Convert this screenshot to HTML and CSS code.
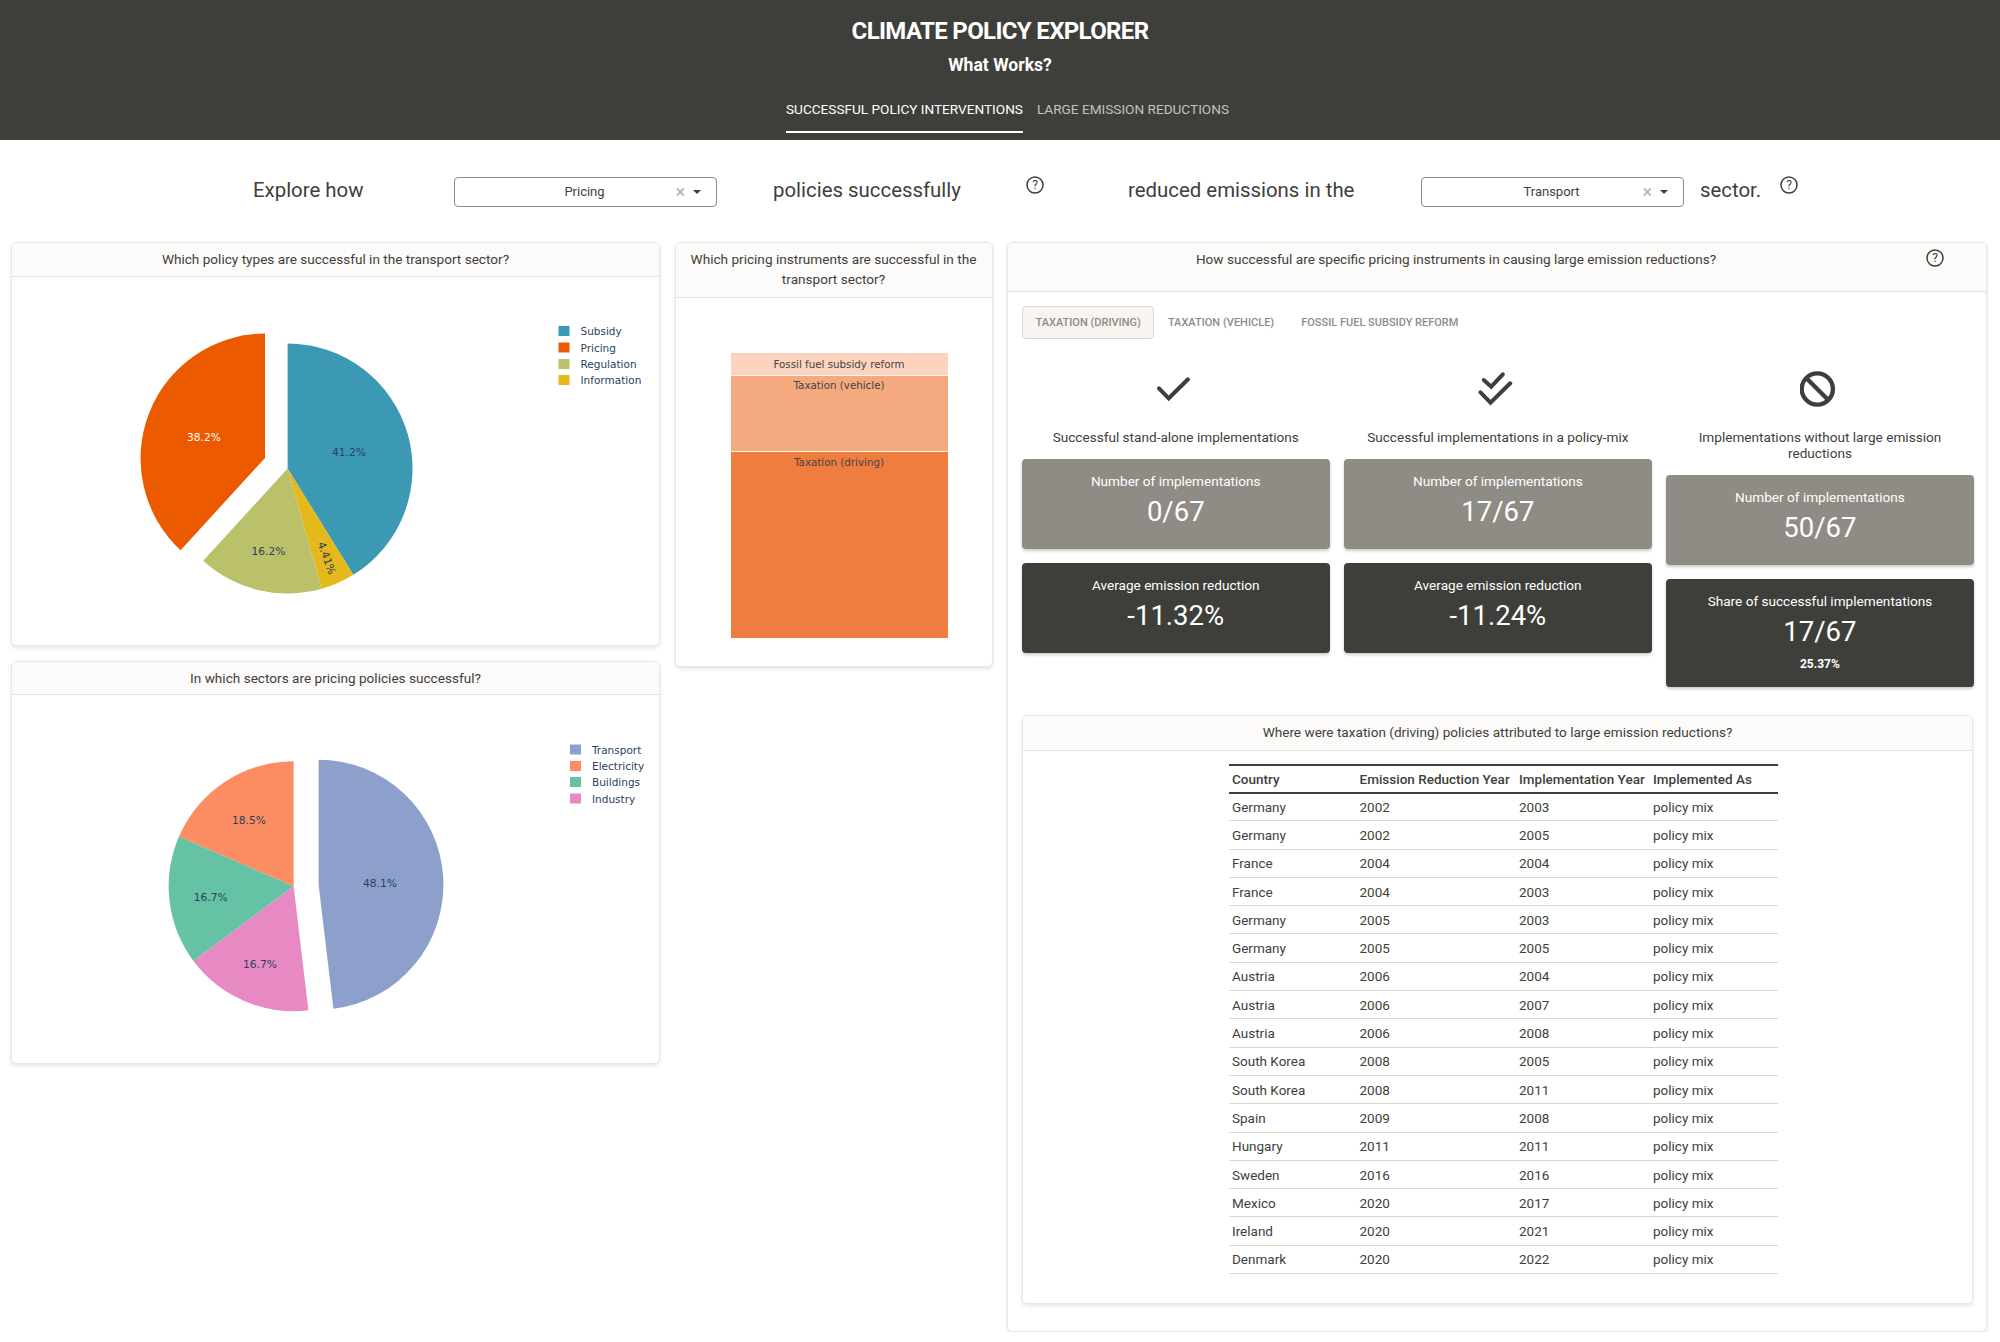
FILE: index.html
```html
<!DOCTYPE html>
<html lang="en">
<head>
    <meta charset="UTF-8">
    <meta name="viewport" content="width=device-width, initial-scale=1.0">
    <title>Climate Policy Explorer</title>
    <link rel="stylesheet" href="styles.css">
</head>
<body>

<header class="top">
    <h1>CLIMATE POLICY EXPLORER</h1>
    <h2>What Works?</h2>
    <nav class="top-nav">
        <a class="top-link active">SUCCESSFUL POLICY INTERVENTIONS</a>
        <a class="top-link">LARGE EMISSION REDUCTIONS</a>
    </nav>
</header>

<section class="intro">
    <span class="intro-text first">Explore how</span>
    <div class="select select-a">
        <span>Pricing</span>
        <i class="clear">×</i><i class="caret"></i>
    </div>
    <span class="intro-text second">policies successfully</span>
    <svg class="help help-a" viewBox="0 0 18 18"><circle cx="9" cy="9" r="8" /><text x="9" y="13">?</text></svg>
    <span class="intro-text third">reduced emissions in the</span>
    <div class="select select-b">
        <span>Transport</span>
        <i class="clear">×</i><i class="caret"></i>
    </div>
    <span class="intro-text fourth">sector.</span>
    <svg class="help help-b" viewBox="0 0 18 18"><circle cx="9" cy="9" r="8" /><text x="9" y="13">?</text></svg>
</section>

<main class="board">
    <div class="stack">
        <div class="card">
            <div class="card-head">Which policy types are successful in the transport sector?</div>
            <svg class="plot" viewBox="12 277 647 368">
                <path fill="#3b99b3" d="M287.6 468.5 L287.6 343.5 A125 125 0 0 1 353.3 574.8 Z" />
                <path fill="#e5b81c" d="M287.6 468.5 L353.3 574.8 A125 125 0 0 1 321.6 588.8 Z" />
                <path fill="#bbc16b" d="M287.6 468.5 L321.6 588.8 A125 125 0 0 1 203.2 560.7 Z" />
                <path fill="#ec5a00" d="M265 458 L180.6 550.2 A125 125 0 0 1 265 333.5 Z" />
                <text class="pie-label" x="349" y="456">41.2%</text>
                <text class="pie-label light" x="204" y="441">38.2%</text>
                <text class="pie-label" x="268.4" y="555">16.2%</text>
                <text class="pie-label" transform="translate(327 558) rotate(70)" y="4">4.41%</text>
                <rect fill="#3b99b3" x="558.500" y="326" width="11" height="10" />
                <rect fill="#ec5a00" x="558.500" y="342.5" width="11" height="10" />
                <rect fill="#bbc16b" x="558.500" y="359" width="11" height="10" />
                <rect fill="#e5b81c" x="558.500" y="375" width="11" height="10" />
                <text class="legend" x="580.500" y="335">Subsidy</text>
                <text class="legend" x="580.500" y="351.500">Pricing</text>
                <text class="legend" x="580.500" y="368">Regulation</text>
                <text class="legend" x="580.500" y="384">Information</text>
            </svg>
        </div>
        <div class="card">
            <div class="card-head">In which sectors are pricing policies successful?</div>
            <svg class="plot" viewBox="12 695.500 647 368">
                <path fill="#8da0cb" d="M318.6 885.2 L318.6 760.2 A125 125 0 0 1 333.4 1009.3 Z" />
                <path fill="#e78ac3" d="M293.6 886.7 L308.4 1010.8 A125 125 0 0 1 193.4 961.4 Z" />
                <path fill="#66c2a5" d="M293.6 886.7 L193.4 961.4 A125 125 0 0 1 179 836.9 Z" />
                <path fill="#fc8d62" d="M293.6 886.7 L179 836.9 A125 125 0 0 1 293.6 761.7 Z" />
                <text class="pie-label" x="380" y="887">48.1%</text>
                <text class="pie-label" x="249" y="824">18.5%</text>
                <text class="pie-label" x="210.700" y="901">16.7%</text>
                <text class="pie-label" x="260" y="968">16.7%</text>
                <rect fill="#8da0cb" x="570" y="745" width="11" height="10" />
                <rect fill="#fc8d62" x="570" y="761.500" width="11" height="10" />
                <rect fill="#66c2a5" x="570" y="777.500" width="11" height="10" />
                <rect fill="#e78ac3" x="570" y="794" width="11" height="10" />
                <text class="legend" x="592" y="754">Transport</text>
                <text class="legend" x="592" y="770.500">Electricity</text>
                <text class="legend" x="592" y="786.500">Buildings</text>
                <text class="legend" x="592" y="803">Industry</text>
            </svg>
        </div>
    </div>

    <div class="card card-treemap">
        <div class="card-head">Which pricing instruments are successful in the transport sector?</div>
        <div class="treemap">
            <div class="tile tile-fossil">Fossil fuel subsidy reform</div>
            <div class="tile tile-vehicle">Taxation (vehicle)</div>
            <div class="tile tile-driving">Taxation (driving)</div>
        </div>
    </div>

    <div class="card card-detail">
        <div class="card-head head-help">
            <span class="head-title">How successful are specific pricing instruments in causing large emission reductions?</span>
            <svg class="help help-c" viewBox="0 0 18 18"><circle cx="9" cy="9" r="8" /><text x="9" y="13">?</text></svg>
        </div>
        <div class="detail-body">
            <div class="tabs">
                <a class="tab active">TAXATION (DRIVING)</a>
                <a class="tab">TAXATION (VEHICLE)</a>
                <a class="tab">FOSSIL FUEL SUBSIDY REFORM</a>
            </div>

            <div class="stat-cols">
                <div class="stat-col">
                    <svg class="stat-icon" viewBox="0 0 40 36">
                        <polyline points="3,17.300 12.700,27.300 32,8.300" />
                    </svg>
                    <p class="stat-caption">Successful stand-alone implementations</p>
                    <div class="stat grey">
                        <div class="stat-label">Number of implementations</div>
                        <div class="stat-value">0/67</div>
                    </div>
                    <div class="stat dark">
                        <div class="stat-label">Average emission reduction</div>
                        <div class="stat-value">-11.32%</div>
                    </div>
                </div>
                <div class="stat-col">
                    <svg class="stat-icon" viewBox="0 0 40 36">
                        <polyline points="5.800,9 13.200,15.700 24.800,3.300" />
                        <polyline points="2.500,21.300 12.500,31.700 32.200,12.300" />
                    </svg>
                    <p class="stat-caption">Successful implementations in a policy-mix</p>
                    <div class="stat grey">
                        <div class="stat-label">Number of implementations</div>
                        <div class="stat-value">17/67</div>
                    </div>
                    <div class="stat dark">
                        <div class="stat-label">Average emission reduction</div>
                        <div class="stat-value">-11.24%</div>
                    </div>
                </div>
                <div class="stat-col">
                    <svg class="stat-icon icon-ban" viewBox="0 0 40 36">
                        <circle cx="17.300" cy="18" r="15.600" />
                        <line x1="7.500" y1="8.200" x2="27" y2="27.800" />
                    </svg>
                    <p class="stat-caption">Implementations without large emission reductions</p>
                    <div class="stat grey">
                        <div class="stat-label">Number of implementations</div>
                        <div class="stat-value">50/67</div>
                    </div>
                    <div class="stat dark stat-share">
                        <div class="stat-label">Share of successful implementations</div>
                        <div class="stat-value">17/67</div>
                        <div class="stat-sub">25.37%</div>
                    </div>
                </div>
            </div>

            <div class="card card-table">
                <div class="card-head">Where were taxation (driving) policies attributed to large emission reductions?</div>
                <table class="impl-table">
                    <thead>
                        <tr><th>Country</th><th>Emission Reduction Year</th><th>Implementation Year</th><th>Implemented As</th></tr>
                    </thead>
                    <tbody>
                        <tr><td>Germany</td><td>2002</td><td>2003</td><td>policy mix</td></tr>
                        <tr><td>Germany</td><td>2002</td><td>2005</td><td>policy mix</td></tr>
                        <tr><td>France</td><td>2004</td><td>2004</td><td>policy mix</td></tr>
                        <tr><td>France</td><td>2004</td><td>2003</td><td>policy mix</td></tr>
                        <tr><td>Germany</td><td>2005</td><td>2003</td><td>policy mix</td></tr>
                        <tr><td>Germany</td><td>2005</td><td>2005</td><td>policy mix</td></tr>
                        <tr><td>Austria</td><td>2006</td><td>2004</td><td>policy mix</td></tr>
                        <tr><td>Austria</td><td>2006</td><td>2007</td><td>policy mix</td></tr>
                        <tr><td>Austria</td><td>2006</td><td>2008</td><td>policy mix</td></tr>
                        <tr><td>South Korea</td><td>2008</td><td>2005</td><td>policy mix</td></tr>
                        <tr><td>South Korea</td><td>2008</td><td>2011</td><td>policy mix</td></tr>
                        <tr><td>Spain</td><td>2009</td><td>2008</td><td>policy mix</td></tr>
                        <tr><td>Hungary</td><td>2011</td><td>2011</td><td>policy mix</td></tr>
                        <tr><td>Sweden</td><td>2016</td><td>2016</td><td>policy mix</td></tr>
                        <tr><td>Mexico</td><td>2020</td><td>2017</td><td>policy mix</td></tr>
                        <tr><td>Ireland</td><td>2020</td><td>2021</td><td>policy mix</td></tr>
                        <tr><td>Denmark</td><td>2020</td><td>2022</td><td>policy mix</td></tr>
                    </tbody>
                </table>
            </div>
        </div>
    </div>
</main>

</body>
</html>
```

FILE: styles.css
```css
* {
    box-sizing: border-box;
}

body {
    margin: 0;
    font-family: Roboto, "Liberation Sans", sans-serif;
    color: #3e3f3a;
    background-color: white;
}

/* Top bar */
.top {
    height: 140px;
    background-color: #3e3f3a;
    color: white;
    text-align: center;
    padding-top: 16px;
}

.top h1 {
    margin: 0;
    font-size: 24px;
    line-height: 30px;
    font-weight: 700;
    letter-spacing: -0.65px;
}

.top h2 {
    margin: 6px 0 0;
    font-size: 17.6px;
    line-height: 26px;
    font-weight: 700;
}

.top-nav {
    display: flex;
    gap: 14px;
    margin: 13px 0 0 786px;
}

.top-link {
    font-size: 13.6px;
    line-height: 20px;
    height: 42px;
    padding-top: 8px;
    color: #c4c2ba;
}

.top-link.active {
    color: white;
    border-bottom: 2px solid white;
}

/* Sentence with the two dropdowns */
.intro {
    display: flex;
    align-items: center;
    height: 102px;
    padding: 0 0 3px 253px;
}

.intro-text {
    font-size: 20.4px;
    line-height: 30px;
}

.intro-text.first {
    width: 201px;
}

.intro-text.second {
    margin-left: 56px;
    width: 253px;
}

.intro-text.third {
    margin-left: 84px;
    width: 293px;
}

.intro-text.fourth {
    margin-left: 16px;
    width: 80px;
}

.select {
    position: relative;
    width: 263px;
    height: 30px;
    margin-top: 5px;
    border: 1px solid #8e8c84;
    border-bottom-width: 1.5px;
    border-radius: 4px;
    text-align: center;
    font-size: 13px;
    line-height: 28px;
    padding-right: 2px;
}

.clear {
    position: absolute;
    right: 31px;
    top: 0;
    font-style: normal;
    font-size: 18px;
    color: #b5b3ac;
}

.caret {
    position: absolute;
    right: 15px;
    top: 12px;
    border-left: 4px solid transparent;
    border-right: 4px solid transparent;
    border-top: 4px solid #3e3f3a;
}

.help {
    width: 18px;
    height: 18px;
    flex: none;
    fill: none;
    stroke: #3e3f3a;
    stroke-width: 1.5;
}

.help text {
    fill: #3e3f3a;
    stroke: none;
    font-size: 12px;
    text-anchor: middle;
}

.help-a,
.help-b {
    margin-top: -9px;
}

/* Cards */
.board {
    display: grid;
    grid-template-columns: 649px 318px 980px;
    gap: 14.5px;
    align-items: start;
    padding-left: 11px;
}

.stack {
    display: flex;
    flex-direction: column;
    gap: 15px;
}

.card {
    background-color: white;
    border: 1px solid #e8e6e0;
    border-radius: 5px;
    box-shadow: 0 2px 4px rgba(0, 0, 0, 0.1);
    overflow: hidden;
}

.card-head {
    background-color: #fcfbf9;
    border-bottom: 1px solid #e4e2db;
    text-align: center;
    font-size: 13.6px;
    line-height: 20.5px;
    padding: 6px 8px;
}

.plot {
    display: block;
    width: 647px;
    height: 368px;
}

.pie-label {
    font-family: "DejaVu Sans", sans-serif;
    font-size: 10.7px;
    text-anchor: middle;
    fill: #2a3f5f;
}

.pie-label.light {
    fill: white;
}

.legend {
    font-family: "DejaVu Sans", sans-serif;
    font-size: 10.5px;
    fill: #2a3f5f;
}

/* Treemap */
.card-treemap {
    height: 425px;
}

.card-treemap .card-head {
    line-height: 20px;
    padding: 6px 8px 8px;
}

.treemap {
    margin: 55px 44px 0 55px;
    font-family: "DejaVu Sans", sans-serif;
    font-size: 10.3px;
    color: #444;
    text-align: center;
}

.tile {
    border-bottom: 1px solid #fdf3ec;
}

.tile-fossil {
    height: 23px;
    line-height: 23px;
    background-color: #fbd3bf;
}

.tile-vehicle {
    height: 76px;
    line-height: 16px;
    padding-top: 1px;
    background-color: #f4a97f;
}

.tile-driving {
    height: 186px;
    line-height: 16px;
    padding-top: 2px;
    background-color: #ef7d40;
    border-bottom: none;
}

/* Right column */
.card-detail {
    height: 1090px;
}

.head-help {
    display: flex;
    height: 49px;
    padding: 6px 0 0;
}

.head-title {
    flex: 1;
}

.help-c {
    margin: 0 42px 0 22px;
}

.detail-body {
    padding: 14px 0 0 14px;
}

.tabs {
    display: flex;
    height: 33px;
}

.tab {
    padding: 0 12.500px;
    font-size: 11px;
    font-weight: 500;
    line-height: 31px;
    color: #8e8c84;
    border: 1px solid transparent;
    border-radius: 4px;
}

.tab.active {
    background-color: #f8f5f0;
    border-color: #dfd7ca;
}

.stat-cols {
    display: grid;
    grid-template-columns: 307.500px 307.500px 307.500px;
    gap: 14.600px;
    margin-top: 32px;
    height: 344px;
}

.stat-icon {
    display: block;
    width: 40px;
    height: 36px;
    margin: 0 auto;
    fill: none;
    stroke: #3e3f3a;
    stroke-width: 4;
    stroke-linecap: round;
}

.icon-ban {
    stroke-width: 4.400;
    stroke-linecap: butt;
}

.stat-caption {
    margin: 22px 0 14px;
    font-size: 13.6px;
    line-height: 16px;
    text-align: center;
    padding: 0 10px;
}

.stat {
    height: 90px;
    margin-bottom: 14px;
    border-radius: 4px;
    color: white;
    text-align: center;
    padding-top: 13px;
    box-shadow: 0 2px 3px rgba(0, 0, 0, 0.2);
}

.stat.grey {
    background-color: #8e8c84;
}

.stat.dark {
    background-color: #3e3f3a;
}

.stat-share {
    height: 108px;
}

.stat-label {
    font-size: 13.6px;
    line-height: 18px;
}

.stat-value {
    font-size: 27.500px;
    line-height: 36px;
    margin-top: 4px;
}

.stat-sub {
    font-size: 12px;
    font-weight: 700;
    line-height: 18px;
    margin-top: 5px;
}

.card-table {
    width: 951px;
    height: 589px;
}

.card-table .card-head {
    padding: 6px 8px 7px;
}

.impl-table {
    width: 548.500px;
    margin: 13px 0 0 206px;
    border-collapse: collapse;
    table-layout: fixed;
    font-size: 13.5px;
}

.impl-table th {
    height: 28px;
    text-align: left;
    font-weight: 500;
    padding: 0 0 0 3px;
    border-top: 2px solid #3e3f3a;
    border-bottom: 2px solid #3e3f3a;
}

.impl-table th:nth-child(1) {
    width: 127.500px;
}

.impl-table th:nth-child(2) {
    width: 159.500px;
}

.impl-table th:nth-child(3) {
    width: 134px;
}

.impl-table td {
    height: 28.300px;
    padding: 0 0 0 3px;
    border-bottom: 1px solid #dfd7ca;
}
```
